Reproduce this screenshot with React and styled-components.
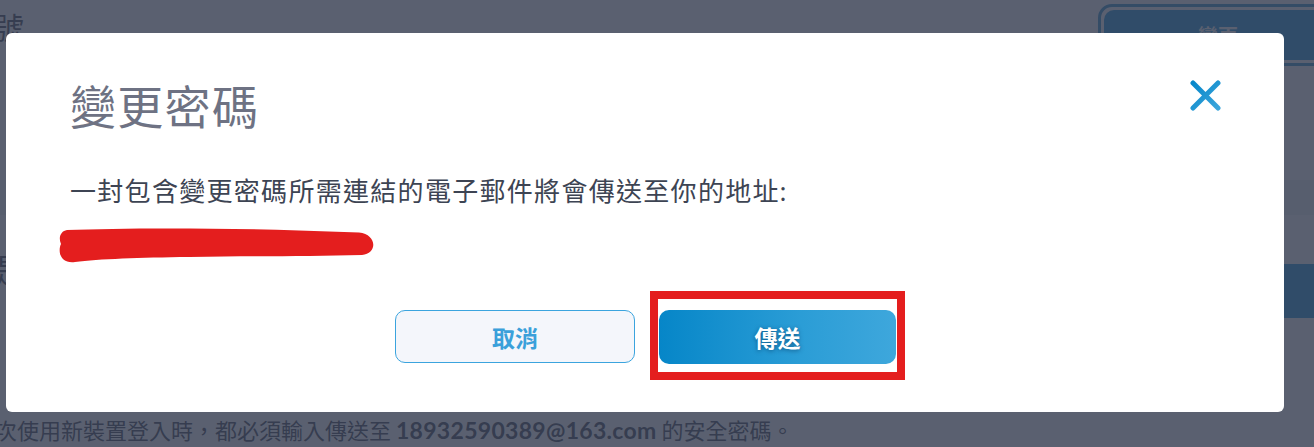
import styled, { createGlobalStyle } from "styled-components";

const GlobalStyle = createGlobalStyle`
  html, body {
    margin: 0;
    padding: 0;
    background: #ffffff;
    overflow: hidden;
  }
  body {
    font-family: "Lato", "Noto Sans CJK TC", sans-serif;
  }
`;

export default function App() {
  return (
    <>
      <GlobalStyle />
      <Page>
        <TopRow>
          <SectionTitle>帳號</SectionTitle>
          <EditButton>
            <span>變更</span>
          </EditButton>
        </TopRow>
        <Fragments>
          <Fragment size="18px">?</Fragment>
          <LightBand />
          <FragmentRow>
            <Fragment size="34px">提</Fragment>
            <SideAction />
          </FragmentRow>
          <Fragment size="26px">=</Fragment>
        </Fragments>
        <Notice>
          每次使用新裝置登入時，都必須輸入傳送至 <b>18932590389@163.com</b> 的安全密碼。
        </Notice>
      </Page>

      <Overlay>
        <Modal>
          <Header>
            <Title>變更密碼</Title>
            <CloseButton aria-label="關閉">
              <svg width="31" height="31" viewBox="0 0 31 31">
                <defs>
                  <linearGradient id="xg" x1="0" y1="0" x2="1" y2="1">
                    <stop offset="0" stopColor="#0787ca" />
                    <stop offset="1" stopColor="#3ba5db" />
                  </linearGradient>
                </defs>
                <path
                  d="M3 3 L28 28 M28 3 L3 28"
                  stroke="url(#xg)"
                  strokeWidth="5"
                  strokeLinecap="round"
                  fill="none"
                />
              </svg>
            </CloseButton>
          </Header>
          <Message>一封包含變更密碼所需連結的電子郵件將會傳送至你的地址:</Message>
          <Redacted width="316" height="35" viewBox="0 0 316 35">
            <path
              d="M8 2 C60 0 150 -0.5 240 2.5 L300 4.5 C318 6 319 26 303 27 C250 28.5 200 28 130 29 C80 29.5 40 31 16 34 C0 36 -1 22 2 16 C-1 9 2 3 8 2 Z"
              fill="#e41e1e"
            />
          </Redacted>
          <Actions>
            <CancelButton>取消</CancelButton>
            <Highlight>
              <SendButton>傳送</SendButton>
            </Highlight>
          </Actions>
        </Modal>
      </Overlay>
    </>
  );
}

const Page = styled.div`
  width: 1314px;
  height: 447px;
  display: flex;
  flex-direction: column;
  color: #2b3140;
`;

const TopRow = styled.div`
  display: flex;
  justify-content: space-between;
  align-items: flex-start;
  padding-top: 4px;
`;

const SectionTitle = styled.h2`
  margin: 4px 0 0 -36px;
  font-size: 30px;
  font-weight: 400;
  line-height: 36px;
  font-family: "Noto Sans CJK TC", sans-serif;
`;

const EditButton = styled.div`
  width: 240px;
  height: 62px;
  margin-right: -24px;
  border: 3px solid #1f86c4;
  border-radius: 14px;
  padding: 3px;
  box-sizing: border-box;
  display: flex;

  span {
    flex: 1;
    background: #0a8bd2;
    border-radius: 10px;
    display: flex;
    justify-content: center;
    align-items: center;
    color: #ffffff;
    font-size: 20px;
    font-weight: 700;
    font-family: "Noto Sans CJK TC", sans-serif;
  }
`;

const Fragments = styled.div`
  display: flex;
  flex-direction: column;
  flex: 1;
  padding-top: 46px;
`;

const Fragment = styled.div`
  margin-left: -14px;
  font-size: ${(p) => p.size};
  line-height: 1.2;
  font-family: "Noto Sans CJK TC", sans-serif;
  color: #2b3140;
`;

const LightBand = styled.div`
  height: 35px;
  margin: 46px 0 35px;
  background: #eef0f4;
`;

const FragmentRow = styled.div`
  display: flex;
  justify-content: space-between;
  align-items: flex-start;
  margin-bottom: 44px;
`;

const SideAction = styled.div`
  width: 220px;
  height: 54px;
  margin-top: 14px;
  margin-right: -40px;
  background: #0a8bd2;
  border-radius: 8px;
`;

const Notice = styled.p`
  margin: 0 0 3px -27px;
  font-size: 22px;
  line-height: 28px;
  font-family: "Noto Sans CJK TC", sans-serif;
  color: #2b3140;
  white-space: nowrap;

  b {
    font-family: "Lato", sans-serif;
    font-weight: 700;
    font-size: 23px;
    letter-spacing: 0.3px;
  }
`;

const Overlay = styled.div`
  position: fixed;
  inset: 0;
  background: rgba(57, 64, 83, 0.83);
  display: flex;
  align-items: center;
  padding-left: 6px;
  padding-bottom: 2px;
`;

const Modal = styled.div`
  width: 1278px;
  box-sizing: border-box;
  background: #ffffff;
  border-radius: 6px;
  padding: 47px 63px 48px 64px;
  display: flex;
  flex-direction: column;
  font-family: "Lato", "Noto Sans CJK TC", sans-serif;
`;

const Header = styled.div`
  display: flex;
  justify-content: space-between;
  align-items: flex-start;
`;

const Title = styled.h1`
  margin: 0;
  font-size: 46px;
  line-height: 54px;
  font-weight: 400;
  letter-spacing: 1.3px;
  color: #6e7283;
`;

const CloseButton = styled.button`
  width: 31px;
  height: 31px;
  padding: 0;
  border: none;
  background: none;
  cursor: pointer;
  display: flex;

  svg {
    display: block;
  }
`;

const Message = styled.p`
  margin: 41px 0 0;
  font-size: 26px;
  line-height: 32px;
  letter-spacing: 1.3px;
  color: #3d4453;
`;

const Redacted = styled.svg`
  display: block;
  margin: 21px 0 0 -11px;
`;

const Actions = styled.div`
  margin-top: 47px;
  display: flex;
  justify-content: center;
  align-items: flex-start;
  gap: 24px;
`;

const BaseButton = styled.button`
  height: 54px;
  box-sizing: border-box;
  border-radius: 10px;
  font-family: "Noto Sans CJK TC", sans-serif;
  font-size: 23px;
  font-weight: 700;
  cursor: pointer;
`;

const CancelButton = styled(BaseButton)`
  width: 240px;
  height: 53px;
  background: #f4f6fb;
  border: 1px solid #3ba4de;
  color: #3aa0da;
`;

const Highlight = styled.div`
  position: relative;
  display: flex;

  &::after {
    content: "";
    position: absolute;
    top: -19px;
    left: -9px;
    right: -9px;
    bottom: -16px;
    border: 8px solid #e41e1e;
    pointer-events: none;
  }
`;

const SendButton = styled(BaseButton)`
  width: 237px;
  border: none;
  background: linear-gradient(90deg, #0686c8 0%, #2b9dd6 60%, #3ea7dc 100%);
  color: #ffffff;
  text-shadow: 0 1px 4px rgba(0, 40, 80, 0.55);
`;
